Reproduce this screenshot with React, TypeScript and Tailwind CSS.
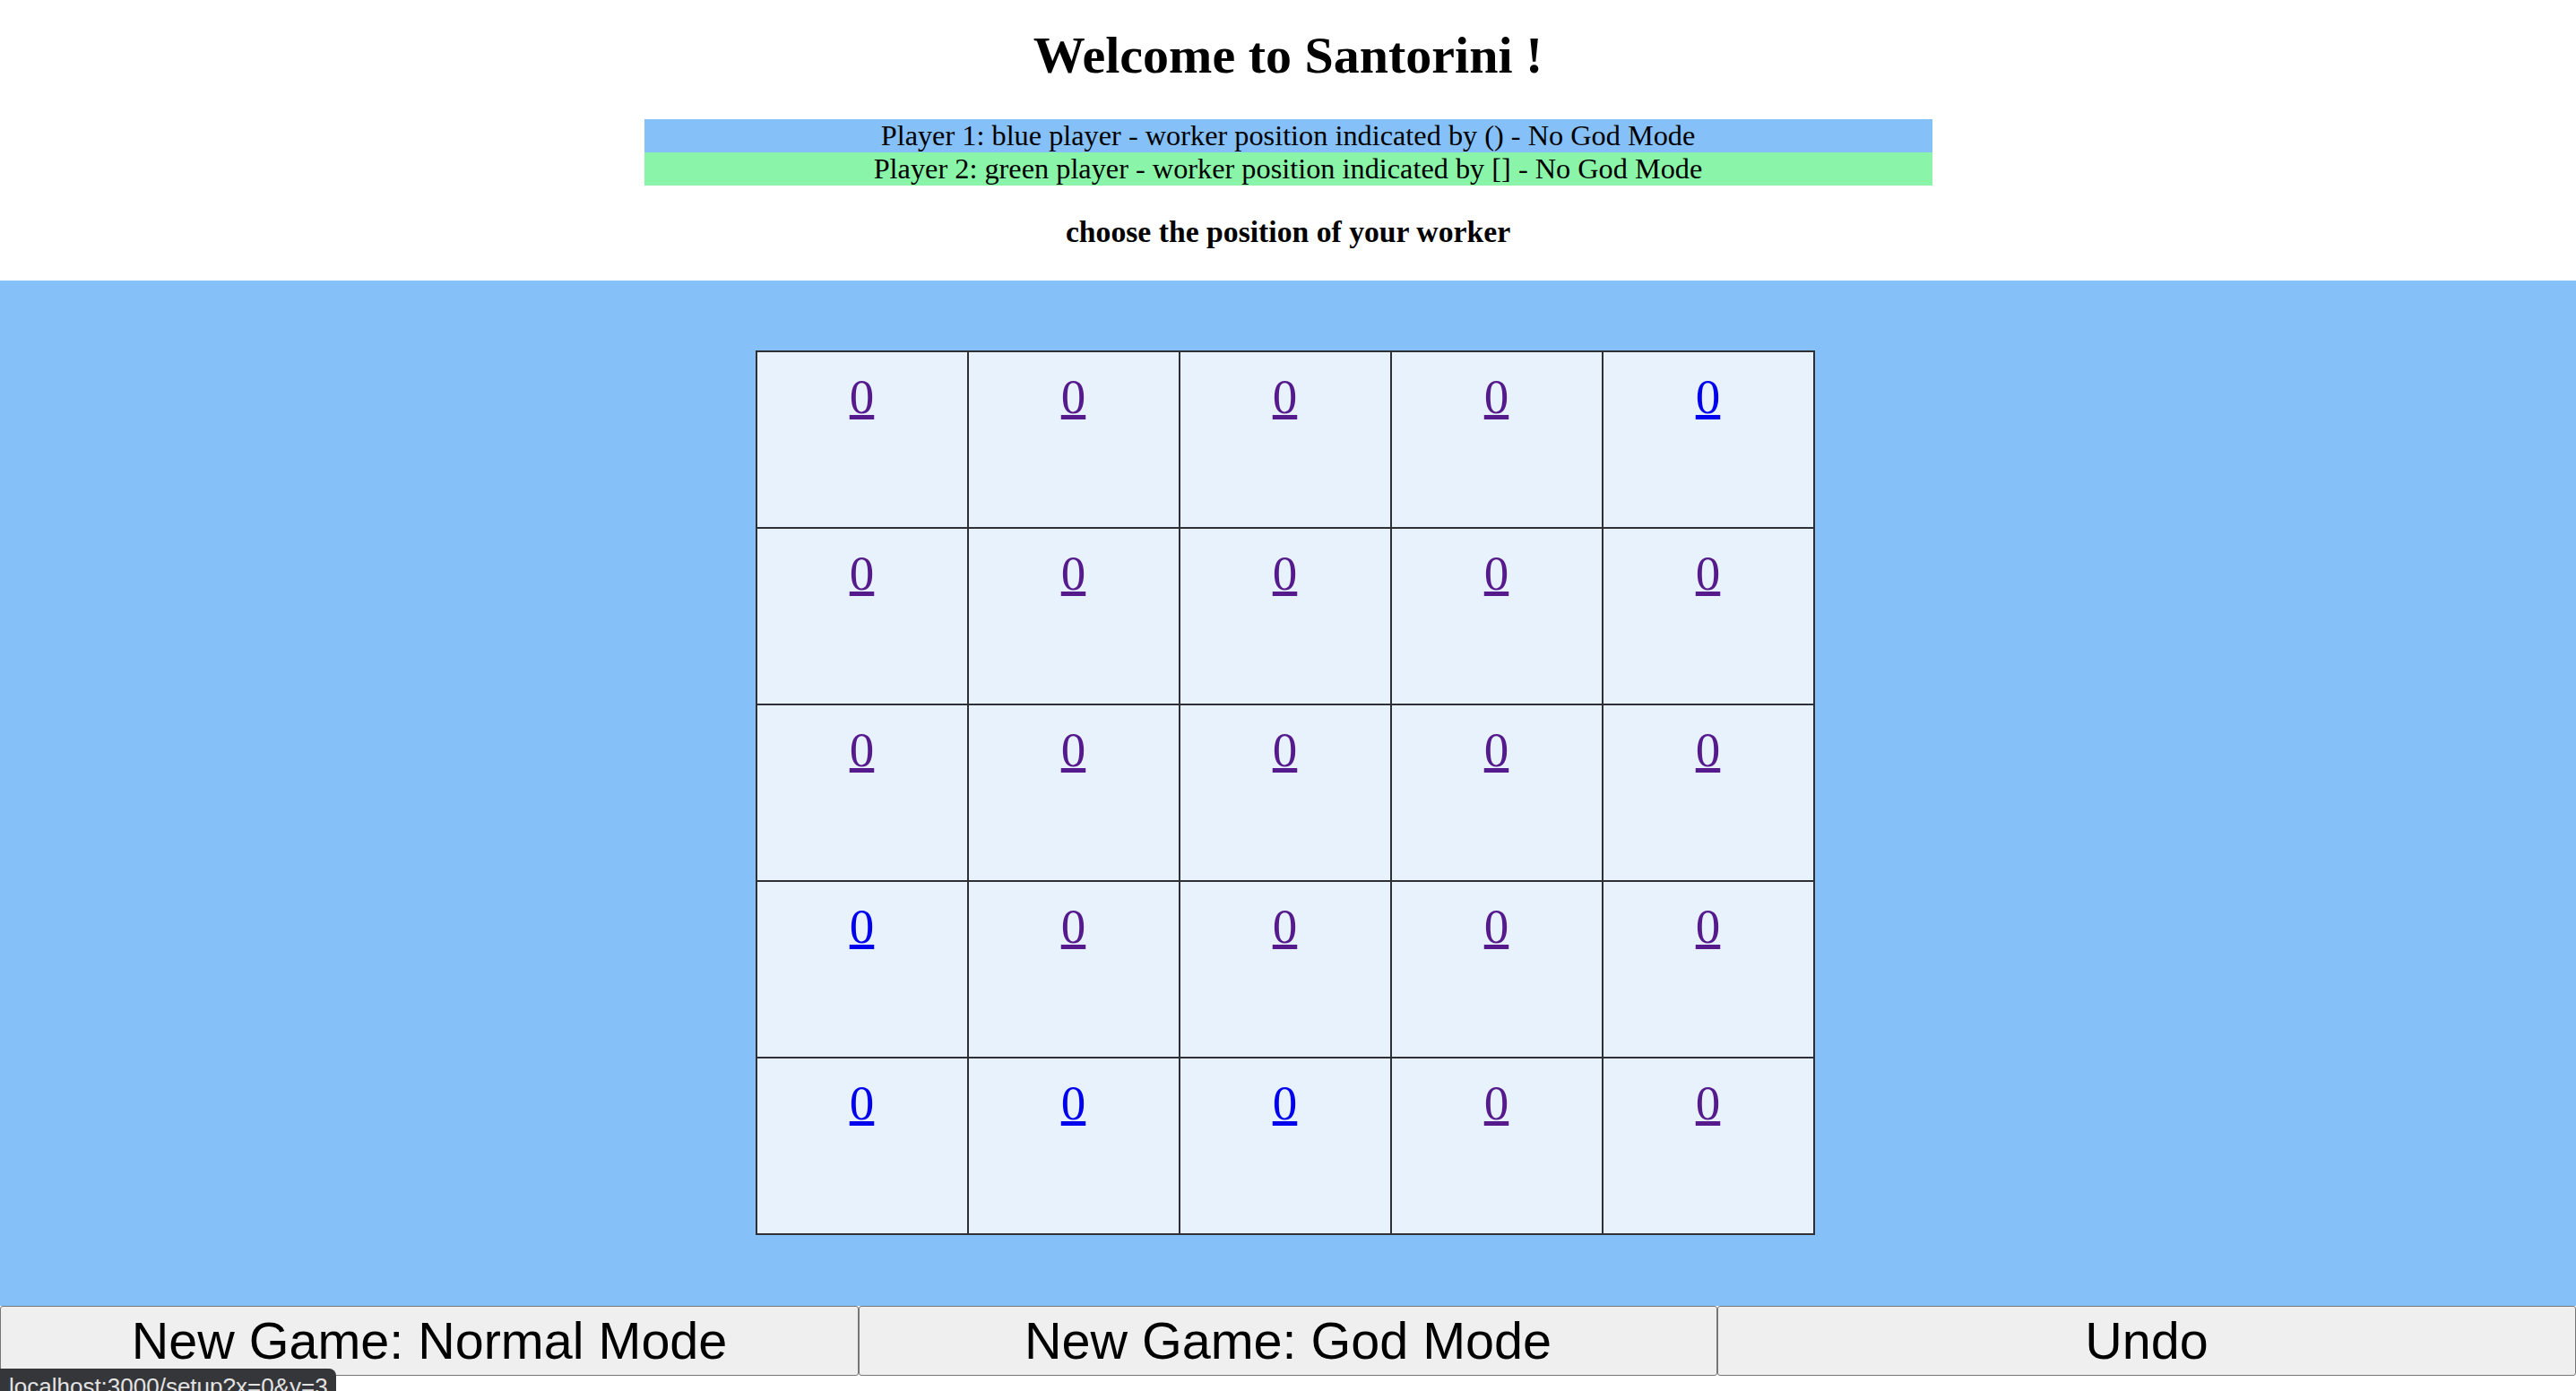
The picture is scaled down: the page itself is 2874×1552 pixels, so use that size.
import React from 'react';

const blueCells = [4, 15, 20, 21, 22];

const Cell = ({ index }: { index: number }) => {
  const visited = !blueCells.includes(index);
  return (
    <div className="bg-[#e8f2fd] pt-[22px] text-center">
      <a
        href="#"
        className={`text-[55px] leading-[55px] underline decoration-[5px] underline-offset-[2px] ${visited ? 'text-[#551a8b]' : 'text-[#0000ee]'}`}
      >
        0
      </a>
    </div>
  );
};

export default function App() {
  const cells = Array.from({ length: 25 }, (_, i) => i);

  return (
    <div className="relative text-black font-['Liberation_Serif',serif]">
      <header className="bg-white h-[313px]">
        <h1 className="pt-[33px] text-center text-[58px] leading-[58px] font-bold">Welcome to Santorini !</h1>
        <div className="mt-[42px] mx-auto w-1/2 text-center text-[32.3px]">
          <div className="bg-[#85c0f9] h-[37px] leading-[37px]">
            Player 1: blue player - worker position indicated by () - No God Mode
          </div>
          <div className="bg-[#8af5a8] h-[37px] leading-[37px]">
            Player 2: green player - worker position indicated by [] - No God Mode
          </div>
        </div>
        <p className="mt-[32px] text-center text-[33.7px] leading-[40px] font-bold">choose the position of your worker</p>
      </header>

      <main className="bg-[#85c0f9] h-[1144px] pt-[78px] pr-[7px]">
        <div className="mx-auto w-fit grid grid-cols-[repeat(5,234px)] auto-rows-[195px] gap-[2px] p-[2px] bg-[#2e3035]">
          {cells.map((i) => (
            <Cell key={i} index={i} />
          ))}
        </div>
      </main>

      <div className="flex font-['Liberation_Sans',Arial,sans-serif]">
        <button className="flex-1 h-[78px] bg-[#efefef] border border-[#767676] rounded-[3px] text-[57.5px] leading-[76px] text-black">
          New Game: Normal Mode
        </button>
        <button className="flex-1 h-[78px] bg-[#efefef] border border-[#767676] rounded-[3px] text-[57.5px] leading-[76px] text-black">
          New Game: God Mode
        </button>
        <button className="flex-1 h-[78px] bg-[#efefef] border border-[#767676] rounded-[3px] text-[57.5px] leading-[76px] text-black">
          Undo
        </button>
      </div>

      <div className="fixed bottom-0 left-0 w-[375px] h-[25px] overflow-hidden bg-[#35363a] rounded-tr-[8px] pl-[10px] pt-[7px] text-[26px] leading-[26px] text-[#e3e3e3] font-['Liberation_Sans',Arial,sans-serif]">
        localhost:3000/setup?x=0&amp;y=3
      </div>
    </div>
  );
}
